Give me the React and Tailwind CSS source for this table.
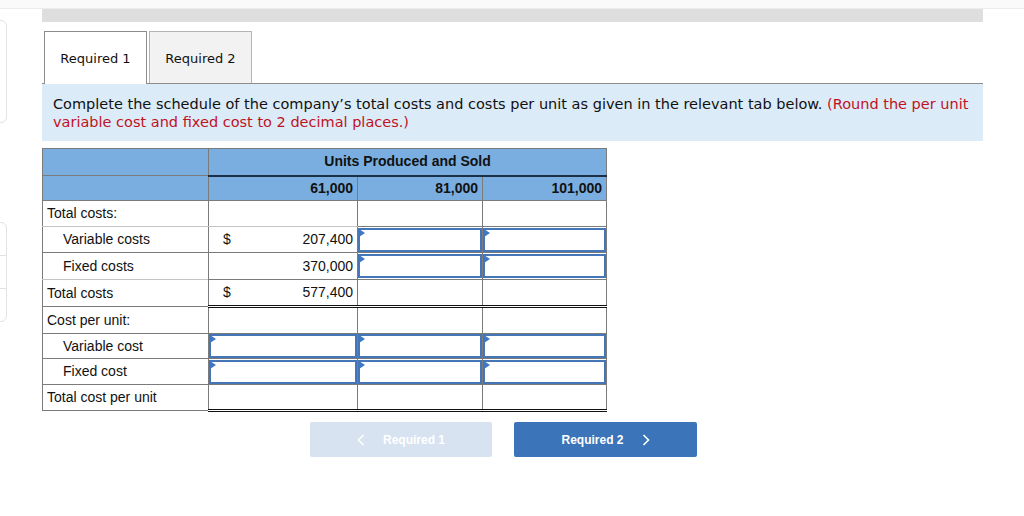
const verdana = { fontFamily: '"DejaVu Sans", Verdana, sans-serif' };

function InputCell() {
  return (
    <td className="relative border border-[#7b7b7b] p-0">
      <div className="relative h-[24px] border-2 border-[#4577b8] bg-white">
        <span className="absolute left-[-1px] top-[-1px] h-0 w-0 border-y-[4px] border-l-[6px] border-y-transparent border-l-[#3f78c2]" />
      </div>
    </td>
  );
}

function Cell({ children, className = "" }) {
  return (
    <td className={`border border-[#7b7b7b] px-[4px] text-right ${className}`}>
      {children}
    </td>
  );
}

export default function App() {
  return (
    <div className="relative h-[516px] w-[1024px] overflow-hidden bg-white text-[#111]">
      <div className="h-[9px] border-b border-[#ececec] bg-[#fafafa]" />

      {/* side widgets cut off at the left edge */}
      <div className="absolute left-[-12px] top-[20px] h-[103px] w-[19px] rounded-md border border-[#e3e3e3]" />
      <div className="absolute left-[-12px] top-[222px] flex h-[100px] w-[19px] flex-col rounded-md border border-[#e3e3e3]">
        <div className="h-[33px] border-b border-[#e3e3e3]" />
        <div className="h-[33px] border-b border-[#e3e3e3]" />
      </div>

      <div className="ml-[42px] w-[941px]">
        <div className="h-[13px] bg-[#dedede]" />

        <div className="mt-[9px] flex items-end border-b border-[#8c8c8c] pl-[2px]" style={verdana}>
          <div className="mb-[-1px] flex h-[53px] w-[103px] items-center justify-center border border-b-0 border-[#8c8c8c] bg-white pt-[2px] text-[13px]">
            Required 1
          </div>
          <div className="ml-[2px] flex h-[52px] w-[103px] items-center justify-center border border-b-0 border-[#b5b5b5] bg-[#f2f2f2] pt-[2px] text-[13px]">
            Required 2
          </div>
        </div>

        <div className="h-[57px] bg-[#dcebf8] px-[11px] pt-[11px] text-[14.5px] leading-[18px]" style={verdana}>
          Complete the schedule of the company’s total costs and costs per unit as given in the relevant tab below.{" "}
          <span className="text-[#c1121f]">(Round the per unit variable cost and fixed cost to 2 decimal places.)</span>
        </div>

        <table
          className="mt-[7px] w-[564px] table-fixed border-collapse border border-[#7b7b7b] text-[14px]"
          style={{ fontFamily: '"Liberation Sans", Arial, sans-serif' }}
        >
          <colgroup>
            <col className="w-[166px]" />
            <col className="w-[149px]" />
            <col className="w-[125px]" />
            <col className="w-[124px]" />
          </colgroup>
          <tbody>
            <tr className="h-[27px] bg-[#7aaee0] font-bold">
              <td className="border border-[#7b7b7b]" />
              <td colSpan={3} className="border border-b-2 border-[#7b7b7b] border-b-[#1d2f45] text-center">
                Units Produced and Sold
              </td>
            </tr>
            <tr className="h-[25px] bg-[#7aaee0] font-bold">
              <td className="border border-[#7b7b7b]" />
              <Cell>61,000</Cell>
              <Cell>81,000</Cell>
              <Cell>101,000</Cell>
            </tr>
            <tr className="h-[26px]">
              <td className="border border-[#7b7b7b] border-b-[#c4c4c4] px-[4px]">Total costs:</td>
              <Cell className="border-b-[#c4c4c4]" />
              <Cell />
              <Cell />
            </tr>
            <tr className="h-[26px]">
              <td className="border border-[#7b7b7b] pl-[20px]">Variable costs</td>
              <td className="border border-[#7b7b7b] px-[4px]">
                <div className="flex justify-between pl-[10px]">
                  <span>$</span>
                  <span>207,400</span>
                </div>
              </td>
              <InputCell />
              <InputCell />
            </tr>
            <tr className="h-[27px]">
              <td className="border border-[#7b7b7b] border-b-[#c4c4c4] pl-[20px]">Fixed costs</td>
              <Cell className="border-b-[#c4c4c4]">370,000</Cell>
              <InputCell />
              <InputCell />
            </tr>
            <tr className="h-[27px]">
              <td className="border border-[#7b7b7b] px-[4px]">Total costs</td>
              <td className="border border-[#7b7b7b] border-b-[3px] border-b-[#111] border-double px-[4px]">
                <div className="flex justify-between pl-[10px]">
                  <span>$</span>
                  <span>577,400</span>
                </div>
              </td>
              <Cell className="border-b-[3px] border-double border-b-[#111]" />
              <Cell className="border-b-[3px] border-double border-b-[#111]" />
            </tr>
            <tr className="h-[27px]">
              <td className="border border-[#7b7b7b] px-[4px]">Cost per unit:</td>
              <Cell />
              <Cell />
              <Cell />
            </tr>
            <tr className="h-[25px]">
              <td className="border border-[#7b7b7b] pl-[20px]">Variable cost</td>
              <InputCell />
              <InputCell />
              <InputCell />
            </tr>
            <tr className="h-[26px]">
              <td className="border border-[#7b7b7b] pl-[20px]">Fixed cost</td>
              <InputCell />
              <InputCell />
              <InputCell />
            </tr>
            <tr className="h-[26px]">
              <td className="border border-[#7b7b7b] px-[4px]">Total cost per unit</td>
              <Cell className="border-b-[3px] border-double border-b-[#111]" />
              <Cell className="border-b-[3px] border-double border-b-[#111]" />
              <Cell className="border-b-[3px] border-double border-b-[#111]" />
            </tr>
          </tbody>
        </table>

        <div
          className="mt-[10px] flex gap-[22px] pl-[268px] text-[12px] font-bold text-white"
          style={{ fontFamily: '"Liberation Sans", Arial, sans-serif' }}
        >
          <div className="flex h-[35px] w-[182px] items-center justify-center gap-[18px] rounded-[2px] bg-[#d7e3f1]">
            <svg width="8" height="12" viewBox="0 0 8 12" fill="none" stroke="white" strokeWidth="1.6">
              <path d="M6.5 1 L1.5 6 L6.5 11" />
            </svg>
            <span>Required 1</span>
          </div>
          <div className="flex h-[35px] w-[183px] items-center justify-center gap-[18px] rounded-[2px] bg-[#3b74b8]">
            <span>Required 2</span>
            <svg width="8" height="12" viewBox="0 0 8 12" fill="none" stroke="white" strokeWidth="1.6">
              <path d="M1.5 1 L6.5 6 L1.5 11" />
            </svg>
          </div>
        </div>
      </div>
    </div>
  );
}
